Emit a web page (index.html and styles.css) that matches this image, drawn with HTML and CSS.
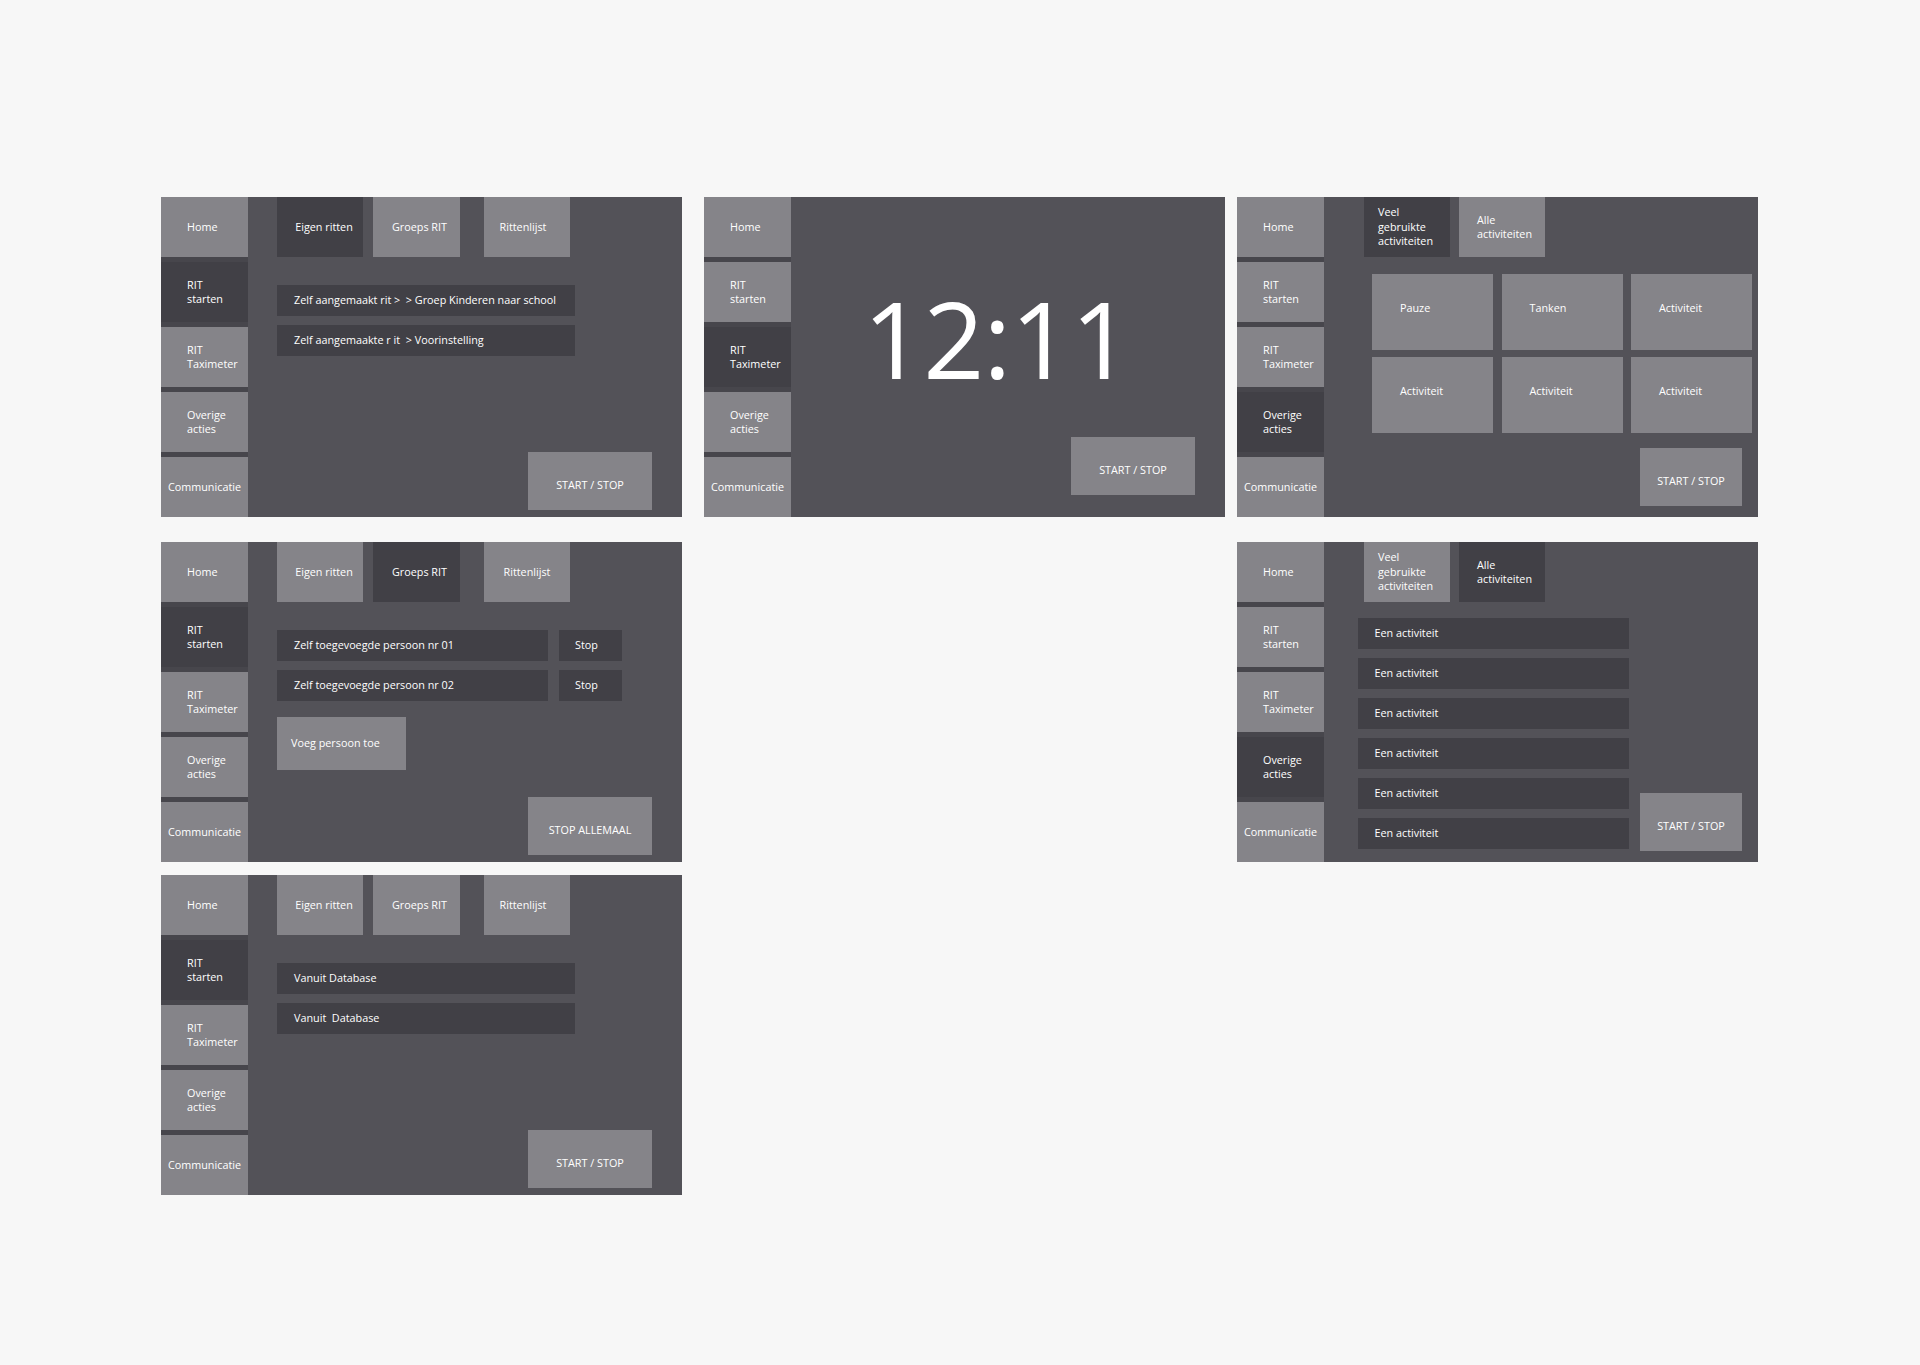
FILE: index.html
```html
<!DOCTYPE html>
<html lang="nl">
<head>
<meta charset="utf-8">
<title>RIT schermen</title>
<link rel="stylesheet" href="styles.css">
</head>
<body>
<div class="board">

  <section class="screen p1">
    <nav class="side">
      <div class="nav">Home</div>
      <div class="nav on">RIT<br>starten</div>
      <div class="nav">RIT<br>Taximeter</div>
      <div class="nav">Overige<br>acties</div>
      <div class="nav wide">Communicatie</div>
    </nav>
    <div class="main rides">
      <div class="tabs">
        <div class="tab first on">Eigen ritten</div>
        <div class="tab mid">Groeps RIT</div>
        <div class="tab far">Rittenlijst</div>
      </div>
      <div class="rows">
        <div class="row">Zelf aangemaakt rit &gt;&nbsp; &gt; Groep Kinderen naar school</div>
        <div class="row">Zelf aangemaakte r it&nbsp; &gt; Voorinstelling</div>
      </div>
      <div class="action">START / STOP</div>
    </div>
  </section>

  <section class="screen p2">
    <nav class="side">
      <div class="nav">Home</div>
      <div class="nav">RIT<br>starten</div>
      <div class="nav on">RIT<br>Taximeter</div>
      <div class="nav">Overige<br>acties</div>
      <div class="nav wide">Communicatie</div>
    </nav>
    <div class="main">
      <div class="clock">12:11</div>
      <div class="action">START / STOP</div>
    </div>
  </section>

  <section class="screen p3">
    <nav class="side">
      <div class="nav">Home</div>
      <div class="nav">RIT<br>starten</div>
      <div class="nav">RIT<br>Taximeter</div>
      <div class="nav on">Overige<br>acties</div>
      <div class="nav wide">Communicatie</div>
    </nav>
    <div class="main acts">
      <div class="tabs atabs">
        <div class="tab left veel on">Veel<br>gebruikte<br>activiteiten</div>
        <div class="tab left alle">Alle<br>activiteiten</div>
      </div>
      <div class="grid">
        <div class="tile">Pauze</div>
        <div class="tile">Tanken</div>
        <div class="tile">Activiteit</div>
        <div class="tile">Activiteit</div>
        <div class="tile">Activiteit</div>
        <div class="tile">Activiteit</div>
      </div>
      <div class="action small">START / STOP</div>
    </div>
  </section>

  <section class="screen p4">
    <nav class="side">
      <div class="nav">Home</div>
      <div class="nav on">RIT<br>starten</div>
      <div class="nav">RIT<br>Taximeter</div>
      <div class="nav">Overige<br>acties</div>
      <div class="nav wide">Communicatie</div>
    </nav>
    <div class="main rides">
      <div class="tabs">
        <div class="tab first">Eigen ritten</div>
        <div class="tab mid on">Groeps RIT</div>
        <div class="tab far">Rittenlijst</div>
      </div>
      <div class="rows">
        <div class="prow">
          <div class="row short">Zelf toegevoegde persoon nr 01</div>
          <div class="stop">Stop</div>
        </div>
        <div class="prow">
          <div class="row short">Zelf toegevoegde persoon nr 02</div>
          <div class="stop">Stop</div>
        </div>
      </div>
      <div class="add">Voeg persoon toe</div>
      <div class="action">STOP ALLEMAAL</div>
    </div>
  </section>

  <section class="screen p5">
    <nav class="side">
      <div class="nav">Home</div>
      <div class="nav">RIT<br>starten</div>
      <div class="nav">RIT<br>Taximeter</div>
      <div class="nav on">Overige<br>acties</div>
      <div class="nav wide">Communicatie</div>
    </nav>
    <div class="main list-main">
      <div class="tabs atabs">
        <div class="tab left veel">Veel<br>gebruikte<br>activiteiten</div>
        <div class="tab left alle on">Alle<br>activiteiten</div>
      </div>
      <div class="list-body">
        <div class="list">
          <div class="row item">Een activiteit</div>
          <div class="row item">Een activiteit</div>
          <div class="row item">Een activiteit</div>
          <div class="row item">Een activiteit</div>
          <div class="row item">Een activiteit</div>
          <div class="row item">Een activiteit</div>
        </div>
        <div class="action small side-btn">START / STOP</div>
      </div>
    </div>
  </section>

  <section class="screen p6">
    <nav class="side">
      <div class="nav">Home</div>
      <div class="nav on">RIT<br>starten</div>
      <div class="nav">RIT<br>Taximeter</div>
      <div class="nav">Overige<br>acties</div>
      <div class="nav wide">Communicatie</div>
    </nav>
    <div class="main rides">
      <div class="tabs">
        <div class="tab first">Eigen ritten</div>
        <div class="tab mid">Groeps RIT</div>
        <div class="tab far shift">Rittenlijst</div>
      </div>
      <div class="rows">
        <div class="row">Vanuit Database</div>
        <div class="row">Vanuit&nbsp; Database</div>
      </div>
      <div class="action">START / STOP</div>
    </div>
  </section>

</div>
</body>
</html>
```

FILE: styles.css
```css
* {
  box-sizing: border-box;
  margin: 0;
  padding: 0;
}

html, body {
  background: #f7f7f7;
}

body {
  font-family: "Open Sans", "Noto Sans", sans-serif;
  color: #ffffff;
  font-size: 10.8px;
  line-height: 14.4px;
}

.board {
  display: grid;
  grid-template-columns: 543px 533px 521px;
  grid-template-rows: 345px 333px 320px;
  padding: 197px 0 0 161px;
}

.screen {
  width: 521px;
  height: 320px;
  display: flex;
  background: #535258;
}

.p4 { grid-column: 1; grid-row: 2; }
.p5 { grid-column: 3; grid-row: 2; }
.p6 { grid-column: 1; grid-row: 3; }

/* sidebar */
.side {
  width: 87px;
  flex: none;
  display: flex;
  flex-direction: column;
  gap: 5px;
  background: #47464c;
}

.nav {
  height: 60px;
  flex: none;
  display: flex;
  align-items: center;
  padding-left: 26px;
  background: #858489;
}

.nav.on { background: #414046; }

.nav.wide {
  padding-left: 0;
  justify-content: center;
}

/* main area */
.main {
  flex: 1;
  display: flex;
  flex-direction: column;
  min-width: 0;
}

.rides { padding-left: 29px; }

.tabs {
  display: flex;
  gap: 10px;
  height: 60px;
  flex: none;
}

.tab {
  width: 86px;
  height: 60px;
  background: #858489;
  display: flex;
  align-items: center;
  justify-content: center;
  text-align: center;
}

.tab.first { padding-left: 8px; }
.tab.mid { width: 87px; padding-left: 6px; }
.tab.far { margin-left: 14px; }
.p1 .tab.far, .tab.far.shift { padding-right: 8px; }
.tab.on { background: #414046; }

.tab.left {
  justify-content: flex-start;
  text-align: left;
}

.tab.veel { padding-left: 14px; }
.tab.alle { padding-left: 18px; }

.atabs { gap: 9px; }

/* row lists */
.rows {
  margin-top: 28px;
  display: flex;
  flex-direction: column;
  gap: 9px;
}

.row {
  width: 298px;
  height: 31px;
  flex: none;
  background: #414046;
  display: flex;
  align-items: center;
  padding-left: 17px;
  white-space: nowrap;
}

.prow {
  display: flex;
  gap: 11px;
}

.row.short { width: 271px; }

.stop {
  width: 63px;
  height: 31px;
  background: #414046;
  display: flex;
  align-items: center;
  padding-left: 16px;
}

.add {
  margin-top: 16px;
  width: 129px;
  height: 53px;
  background: #858489;
  display: flex;
  align-items: center;
  padding-left: 14px;
}

/* big buttons */
.action {
  width: 124px;
  height: 58px;
  flex: none;
  margin-top: auto;
  align-self: flex-end;
  margin-right: 30px;
  margin-bottom: 7px;
  background: #858489;
  display: flex;
  align-items: center;
  justify-content: center;
  padding-top: 8px;
}

.action.small {
  width: 102px;
  margin-right: 16px;
  margin-bottom: 11px;
}

/* clock screen */
.clock {
  font-size: 107px;
  line-height: 107px;
  margin-top: 87px;
  margin-left: 72px;
  letter-spacing: -1px;
  white-space: nowrap;
}

.p2 .action { margin-bottom: 22px; }

/* activities grid */
.acts { padding-left: 40px; }

.grid {
  margin-top: 17px;
  margin-left: 8px;
  display: grid;
  grid-template-columns: repeat(3, 121px);
  grid-auto-rows: 76px;
  column-gap: 8.5px;
  row-gap: 7px;
}

.tile {
  background: #858489;
  display: flex;
  align-items: center;
  padding-left: 28px;
  padding-bottom: 8px;
}

/* activities list */
.list-main { padding-left: 33.5px; }
.list-main .atabs { margin-left: 6.5px; }

.list-body {
  flex: 1;
  display: flex;
  margin-top: 15.5px;
}

.list {
  display: flex;
  flex-direction: column;
  gap: 9px;
}

.row.item { width: 271.5px; }

.side-btn {
  margin-left: auto;
  margin-top: 0;
}
```
